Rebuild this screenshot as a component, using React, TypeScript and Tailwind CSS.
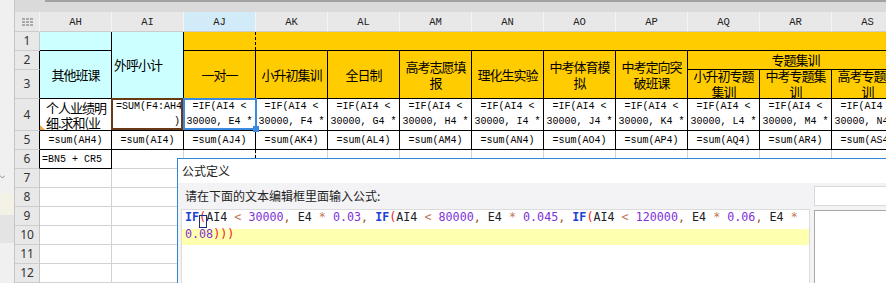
import React from "react";

const COLS = ["AH", "AI", "AJ", "AK", "AL", "AM", "AN", "AO", "AP", "AQ", "AR", "AS"];
const REFS = ["E4", "F4", "G4", "H4", "I4", "J4", "K4", "L4", "M4", "N4"];
const MONO = "font-['Liberation_Mono','Courier_New',monospace]";
const CJK = "font-['Noto_Sans_CJK_SC','Noto_Sans',sans-serif]";
const GRID = "border-r border-b border-[#d2d2d2]";
const BLACK = "border-r border-b border-black";

function RowHead({ n, edge }: { n: number; edge?: boolean }) {
  return (
    <div
      className={`flex items-center justify-center bg-[#e8e8e8] border-r border-b border-b-[#cdcdcd] ${
        edge ? "border-r-black" : "border-r-[#c4c4c4]"
      } font-['Noto_Sans',sans-serif] text-[12px] text-[#333]`}
    >
      {n}
    </div>
  );
}

// page break marker on the AJ|AK line
function PageBreak({ onBorder }: { onBorder?: boolean }) {
  return (
    <div
      className={`absolute top-0 bottom-0 w-0 border-r border-dashed border-black ${
        onBorder ? "-right-px -bottom-px" : "right-0"
      }`}
    />
  );
}

function Head({ lines, cls = "" }: { lines: string[]; cls?: string }) {
  return (
    <div
      className={`bg-[#ffcc00] ${BLACK} flex flex-col items-center justify-center overflow-hidden text-center ${CJK} text-[13px] tracking-[-1px] leading-[16px] text-black ${cls}`}
    >
      {lines.map((l) => (
        <div key={l} className="whitespace-nowrap">
          {l}
        </div>
      ))}
    </div>
  );
}

function Code({ text, box }: { text: string; box?: boolean }) {
  const parts = text.match(/IF|\d+(?:\.\d+)?|[A-Z]+\d+|[()]+|[<*]|,|\s+/g) ?? [];
  let boxed = false;
  return (
    <>
      {parts.map((p, i) => {
        if (p === "IF") return <span key={i} className="text-[#1d3fd8] font-bold">IF</span>;
        if (/^[()]+$/.test(p)) {
          if (box && !boxed) {
            boxed = true;
            return (
              <span key={i} className="relative text-[#f0161e]">
                {p}
                <span className="absolute left-[-0.5px] top-[5px] w-[8px] h-[13px] border border-[#1c2b80]" />
              </span>
            );
          }
          return <span key={i} className="text-[#f0161e]">{p}</span>;
        }
        if (/^\d/.test(p)) return <span key={i} className="text-[#8033d6]">{p}</span>;
        if (p === "<" || p === "*") return <span key={i} className="text-[#c07a55]">{p}</span>;
        if (p === ",") return <span key={i} className="text-[#9a5a1c]">,</span>;
        return <span key={i} className="text-[#222]">{p}</span>;
      })}
    </>
  );
}

export default function App() {
  return (
    <div className="relative w-[886px] h-[283px] overflow-hidden bg-white">
      <div className="grid w-[904px] h-[283px] grid-cols-[15px_25px_repeat(12,72px)] grid-rows-[12px_20px_19px_19px_29px_32px_19px_19px_19px_19px_19px_19px_19px_19px]">
        {/* left strip */}
        <div className="row-span-14 relative flex flex-col bg-[#f0f0f0] border-r border-[#c6c6c6]">
          <div className="h-[193px]" />
          <div className="h-[22px] bg-[#f4f1e7]" />
          <div className="h-[28px] bg-[#e4e4e4]" />
          <svg className="absolute left-0 top-[175px]" width="5" height="4" viewBox="0 0 5 4">
            <polyline points="0,0.5 2.5,3 5,0.5" fill="none" stroke="#8a8a8a" strokeWidth="1" />
          </svg>
        </div>
        {/* toolbar strip */}
        <div className="col-span-13 bg-[#dadada]">
          <div className="ml-[30px] h-[2px] bg-[#a3a3a3]" />
        </div>

        {/* column headers */}
        <div className="flex items-center justify-center bg-[#e8e8e8] border-r border-b border-r-[#f4f4f4] border-b-[#cccccc]">
          <div className="grid grid-cols-3 gap-[1px]">
            {Array.from({ length: 9 }).map((_, i) => (
              <div key={i} className="w-[3px] h-[2px] bg-[#a9a9a9]" />
            ))}
          </div>
        </div>
        {COLS.map((c) => (
          <div
            key={c}
            className={`flex items-center justify-center pt-[2px] border-r border-b border-r-[#f4f4f4] border-b-[#cccccc] ${
              c === "AJ" ? "bg-[#d2ebf8]" : "bg-[#e8e8e8]"
            } ${MONO} text-[10.5px] text-[#222]`}
          >
            {c}
          </div>
        ))}

        {/* row 1 */}
        <RowHead n={1} />
        <div className={`bg-[#ccffff] ${BLACK}`} />
        <div className={`row-span-3 bg-[#ccffff] ${BLACK} flex items-center pl-[2px] ${CJK} text-[13px] tracking-[-1px] whitespace-nowrap`}>
          外呼小计
        </div>
        <div className="relative bg-[#ffcc00] border-b border-black">
          <PageBreak />
        </div>
        <div className="col-span-9 bg-[#ffcc00] border-b border-black" />

        {/* rows 2-3 */}
        <RowHead n={2} edge />
        <Head lines={["其他班课"]} cls="row-span-2 !bg-[#ccffff]" />
        <Head lines={["一对一"]} cls="row-span-2" />
        <Head lines={["小升初集训"]} cls="row-span-2" />
        <Head lines={["全日制"]} cls="row-span-2" />
        <Head lines={["高考志愿填", "报"]} cls="row-span-2" />
        <Head lines={["理化生实验"]} cls="row-span-2" />
        <Head lines={["中考体育模", "拟"]} cls="row-span-2" />
        <Head lines={["中考定向突", "破班课"]} cls="row-span-2" />
        <Head lines={["专题集训"]} cls="col-span-3" />
        <RowHead n={3} edge />
        <Head lines={["小升初专题", "集训"]} />
        <Head lines={["中考专题集", "训"]} />
        <Head lines={["高考专题集", "训"]} />

        {/* row 4 */}
        <RowHead n={4} edge />
        <div className={`relative ${BLACK} flex flex-col justify-center pl-[6px] overflow-hidden whitespace-nowrap ${CJK} text-[13px] tracking-[-1px] leading-[15px]`}>
          <div>个人业绩明</div>
          <div>细.求和(业</div>
          <div className="absolute left-0 bottom-0 w-0 h-0 border-l-[5px] border-t-[5px] border-l-[#f2a33a] border-t-transparent" />
        </div>
        <div className={`relative ${BLACK} flex flex-col justify-center ${MONO} text-[10px] leading-[14.5px] whitespace-nowrap`}>
          <div className="pl-[4px]">=SUM(F4:AH4</div>
          <div className="text-right pr-[3px]">)</div>
          <div className="absolute -left-px -top-px right-0 bottom-0 border-2 border-[#6a3a17]" />
        </div>
        {REFS.map((r, i) => (
          <div
            key={r}
            className={`relative ${BLACK} flex flex-col justify-center text-center ${MONO} text-[10px] leading-[14.5px] whitespace-nowrap overflow-visible`}
          >
            <div>=IF(AI4 &lt;</div>
            <div className="overflow-hidden">30000, {r} *</div>
            {i === 0 && (
              <div className="absolute -left-px -top-px -right-[2px] bottom-0 z-10 border-2 border-[#3b8ae0]">
                <div className="absolute -right-[4px] -bottom-[4px] w-[6px] h-[6px] bg-[#3b8ae0]" />
              </div>
            )}
          </div>
        ))}

        {/* row 5 */}
        <RowHead n={5} edge />
        {COLS.map((c) => (
          <div key={c} className={`${BLACK} flex items-center justify-center ${MONO} text-[10px] whitespace-nowrap`}>
            =sum({c}4)
          </div>
        ))}

        {/* row 6 */}
        <RowHead n={6} edge />
        <div className={`${BLACK} flex items-center pl-[2px] ${MONO} text-[10px] whitespace-nowrap`}>=BN5 + CR5</div>
        {COLS.slice(1).map((c) => (
          <div key={c} className={`relative ${GRID}`}>
            {c === "AJ" && <PageBreak onBorder />}
          </div>
        ))}

        {/* rows 7-12 */}
        {[7, 8, 9, 10, 11, 12].map((n) => (
          <React.Fragment key={n}>
            <RowHead n={n} />
            {COLS.map((c) => (
              <div key={c} className={`relative ${GRID}`}>
                {c === "AJ" && <PageBreak onBorder />}
              </div>
            ))}
          </React.Fragment>
        ))}
      </div>

      {/* formula dialog */}
      <div className={`absolute left-[177px] top-[158px] w-[740px] h-[140px] flex flex-col bg-white border-l border-t border-[#2f85d6] ${CJK} text-[#222]`}>
        <div className="h-[24px] flex items-center pl-[4px] text-[12px]">公式定义</div>
        <div className="flex-1 flex bg-[#f3f3f5]">
          <div className="w-[632px] flex flex-col">
            <div className="h-[26px] flex items-center pl-[7px] text-[12px]">请在下面的文本编辑框里面输入公式:</div>
            <div className="ml-[3px] flex-1 bg-white border border-[#dcdcdc] font-['DejaVu_Sans_Mono',monospace] text-[11.7px] whitespace-pre">
              <div className="h-[19px] leading-[14px] pl-[3px]">
                <Code text="IF(AI4 < 30000, E4 * 0.03, IF(AI4 < 80000, E4 * 0.045, IF(AI4 < 120000, E4 * 0.06, E4 *" box />
              </div>
              <div className="h-[16px] leading-[10px] pl-[3px] bg-[#ffffb0]">
                <Code text="0.08)))" />
              </div>
            </div>
          </div>
          <div className="ml-[4px] flex-1 flex flex-col">
            <div className="mt-[3px] h-[20px] bg-white border border-[#d9d9d9]" />
            <div className="mt-[4px] flex-1 bg-white border border-[#a8a8a8]" />
          </div>
        </div>
      </div>
    </div>
  );
}
